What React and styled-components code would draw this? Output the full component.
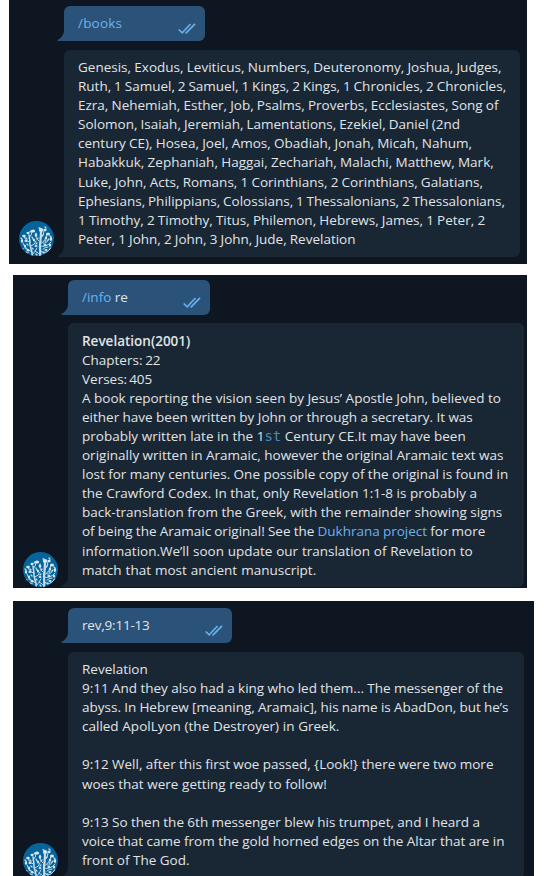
import React from "react";
import styled, { createGlobalStyle } from "styled-components";

const GlobalStyle = createGlobalStyle`
  body { margin: 0; background: #fff; }
`;

const Page = styled.main`
  display: flex;
  flex-direction: column;
  width: 544px;
  height: 876px;
  overflow: hidden;
  font-family: "Open Sans", "Noto Sans", sans-serif;
  font-size: 13.5px;
  line-height: 19.1px;
  color: #e0e4e8;
`;

const Chat = styled.section`
  box-sizing: border-box;
  flex: none;
  display: flex;
  flex-direction: column;
  gap: ${(p) => p.$gap}px;
  width: ${(p) => p.$width}px;
  height: ${(p) => p.$height}px;
  margin-left: ${(p) => p.$left}px;
  margin-bottom: ${(p) => p.$after}px;
  padding-top: ${(p) => p.$top}px;
  overflow: hidden;
  background: #0e1621;
`;

const Sent = styled.div`
  position: relative;
  box-sizing: border-box;
  flex: none;
  display: flex;
  justify-content: space-between;
  width: ${(p) => p.$width}px;
  height: 35px;
  margin-left: 55px;
  padding: 8px 9px 0 14px;
  border-radius: 6px 6px 6px 0;
  background: #2b5278;
  letter-spacing: ${(p) => p.$track || 0}px;
`;

const Tail = styled.svg`
  position: absolute;
  left: -7px;
  bottom: 0;
  width: 7px;
  height: 11px;
  fill: ${(p) => p.$fill};
`;

const Ticks = styled.svg`
  width: 18px;
  height: 11px;
  margin-top: 9px;
  fill: none;
  stroke: #67b0ec;
  stroke-width: 1.7;
`;

const Reply = styled.div`
  display: flex;
  align-items: flex-end;
  gap: 10px;
  padding-left: 10px;
`;

const Avatar = styled.svg`
  flex: none;
  width: 35px;
  height: 35px;
  margin-bottom: ${(p) => p.$lift}px;
`;

const Received = styled.div`
  position: relative;
  box-sizing: border-box;
  width: 456px;
  height: ${(p) => p.$height}px;
  padding: ${(p) => p.$inset}px 0 0 14px;
  border-radius: 6px 6px 6px 0;
  background: #192633;
`;

const Line = styled.div`
  height: 19.1px;
  white-space: pre;
  word-spacing: ${(p) => p.$space || 0}px;
`;

const Accent = styled.span`
  color: #6ab3f0;
`;
const Title = styled.strong`
  font-weight: 600;
`;
const Code = styled.code`
  font-family: "DejaVu Sans Mono", monospace;
  font-size: 14px;
  line-height: 1;
  color: #5288b8;
`;

function TailShape({ fill }) {
  return (
    <Tail $fill={fill} viewBox="0 0 7 11">
      <path d="M7 0C7 5 4 8 .4 10.2Q0 11 1 11H7Z" />
    </Tail>
  );
}

function TreeAvatar({ lift }) {
  return (
    <Avatar $lift={lift} viewBox="0 0 35 35">
      <defs>
        <clipPath id="disc"><circle cx="17.5" cy="17.5" r="17.5" /></clipPath>
      </defs>
      <g clipPath="url(#disc)">
        <rect width="35" height="35" fill="#07639c" />
        <g fill="none" stroke="#c5dde8" strokeLinecap="round">
          <path strokeWidth="2.2" d="M21 35C22 29 20 25 21.500 20L22 11" />
          <path strokeWidth="1.5" d="M13 35C14 29 10 26 11 21L10 14" />
          <path strokeWidth="1" d="M21 23Q27 20 28 13M21 25Q27 27 32 21M20 20Q16 17 17 12M13 31Q6 28 4 22M12 25Q16 24 17 20M11 21Q6 20 5 15M21 30Q27 34 31 28M22 17Q25 15 25 10M10 17Q13 14 13 11M13 34Q17 30 18 27M24 22Q28 23 29 19M16 30Q20 32 21 34M6 27Q10 28 9 32M24 28Q26 26 29 26" />
          <path strokeWidth="1.3" d="M2 17l1 1M7 17l1 1M13 16l1 2M18 18l1-1M24 14l-1 1M31 15l1 1M30 18l-1 1M26 20l1 0M32 27l-1 1M24 31l1 1M28 32l1-1M18 22l-1 1M14 28l-1-1M8 23l1 1M3 28l1 0M7 31l1 1M17 33l1 1M11 11l1-1M20 7l1 0M26 6l1 1" />
        </g>
        <g fill="#d8e8ed">
          <ellipse cx="14" cy="10" rx="2.2" ry="1.5" />
          <ellipse cx="22" cy="9" rx="2.2" ry="2" />
          <ellipse cx="26" cy="9" rx="1.7" ry="1.3" />
          <ellipse cx="29" cy="13" rx="2" ry="1.5" />
          <ellipse cx="32" cy="18" rx="1.2" ry="2" />
          <ellipse cx="27" cy="17" rx="1.2" ry="1.6" />
          <ellipse cx="17" cy="14" rx="1.3" ry="1.8" />
          <ellipse cx="9" cy="12" rx="1.5" ry="1.2" />
          <ellipse cx="5" cy="15" rx="1.8" ry="1.3" />
          <ellipse cx="3" cy="20" rx="1.2" ry="1.7" />
          <ellipse cx="7" cy="20" rx="1.6" ry="1" />
          <ellipse cx="6" cy="25" rx="1.1" ry="1.6" />
          <ellipse cx="15" cy="19" rx="1.1" ry="1.6" />
          <ellipse cx="17" cy="25" rx="1.5" ry="1" />
          <ellipse cx="26" cy="24" rx="1.6" ry="1.1" />
          <ellipse cx="31" cy="24" rx="1.2" ry="1.6" />
          <ellipse cx="27" cy="29" rx="1.6" ry="1.1" />
          <ellipse cx="9" cy="29" rx="1.6" ry="1" />
        </g>
      </g>
    </Avatar>
  );
}

function SentMessage({ width, track, children }) {
  return (
    <Sent $width={width} $track={track}>
      <TailShape fill="#2b5278" />
      <span>{children}</span>
      <Ticks viewBox="0 0 18 11">
        <path d="M.7 6.5 4.2 9.8 12.5 1M8.2 9.8 17 .8M7.5 9.3l1 1" />
      </Ticks>
    </Sent>
  );
}

function ReplyMessage({ height, lift, inset = 8, lines }) {
  return (
    <Reply>
      <TreeAvatar lift={lift} />
      <Received $height={height} $inset={inset}>
        <TailShape fill="#192633" />
        {lines.map(([content, space], i) => (
          <Line key={i} $space={space}>{content}</Line>
        ))}
      </Received>
    </Reply>
  );
}

const books = [
  ["Genesis, Exodus, Leviticus, Numbers, Deuteronomy, Joshua, Judges,", -0.2],
  ["Ruth, 1 Samuel, 2 Samuel, 1 Kings, 2 Kings, 1 Chronicles, 2 Chronicles,", -0.6],
  ["Ezra, Nehemiah, Esther, Job, Psalms, Proverbs, Ecclesiastes, Song of", -0.35],
  ["Solomon, Isaiah, Jeremiah, Lamentations, Ezekiel, Daniel (2nd", -0.45],
  ["century CE), Hosea, Joel, Amos, Obadiah, Jonah, Micah, Nahum,", -0.2],
  ["Habakkuk, Zephaniah, Haggai, Zechariah, Malachi, Matthew, Mark,", -0.2],
  ["Luke, John, Acts, Romans, 1 Corinthians, 2 Corinthians, Galatians,", -0.3],
  ["Ephesians, Philippians, Colossians, 1 Thessalonians, 2 Thessalonians,", -0.7],
  ["1 Timothy, 2 Timothy, Titus, Philemon, Hebrews, James, 1 Peter, 2", -0.3],
  ["Peter, 1 John, 2 John, 3 John, Jude, Revelation", -0.4],
];

const info = [
  [<Title>Revelation(2001)</Title>],
  ["Chapters: 22", -0.8],
  ["Verses: 405", -1.5],
  ["A book reporting the vision seen by Jesus’ Apostle John, believed to"],
  ["either have been written by John or through a secretary. It was", -0.13],
  [<>probably written late in the 1<Code>st</Code> Century CE.It may have been</>, 0.1],
  ["originally written in Aramaic, however the original Aramaic text was", -0.1],
  ["lost for many centuries. One possible copy of the original is found in", -0.08],
  ["the Crawford Codex. In that, only Revelation 1:1-8 is probably a"],
  ["back-translation from the Greek, with the remainder showing signs"],
  [<>of being the Aramaic original! See the <Accent>Dukhrana project</Accent> for more</>, -0.35],
  ["information.We’ll soon update our translation of Revelation to", 0.28],
  ["match that most ancient manuscript.", 0.5],
];

const verses = [
  ["Revelation"],
  ["9:11 And they also had a king who led them... The messenger of the", -0.2],
  ["abyss. In Hebrew [meaning, Aramaic], his name is AbadDon, but he’s", -0.3],
  ["called ApolLyon (the Destroyer) in Greek.", 0.2],
  [""],
  ["9:12 Well, after this first woe passed, {Look!} there were two more", -0.18],
  ["woes that were getting ready to follow!", 0.15],
  [""],
  ["9:13 So then the 6th messenger blew his trumpet, and I heard a", -0.13],
  ["voice that came from the gold horned edges on the Altar that are in", -0.08],
  ["front of The God."],
];

export default function App() {
  return (
    <Page>
      <GlobalStyle />
      <Chat $left={9} $width={518} $height={264} $top={6} $gap={9} $after={11}>
        <SentMessage width={141} track={0.2}><Accent>/books</Accent></SentMessage>
        <ReplyMessage height={207} lift={1} lines={books} />
      </Chat>
      <Chat $left={13} $width={514} $height={313} $top={5} $gap={8} $after={13}>
        <SentMessage width={142}><Accent>/info</Accent> re</SentMessage>
        <ReplyMessage height={264} lift={0} inset={8.5} lines={info} />
      </Chat>
      <Chat $left={13} $width={521} $height={275} $top={7} $gap={9} $after={0}>
        <SentMessage width={164} track={-0.2}>rev,9:11-13</SentMessage>
        <ReplyMessage height={226} lift={0} lines={verses} />
      </Chat>
    </Page>
  );
}
